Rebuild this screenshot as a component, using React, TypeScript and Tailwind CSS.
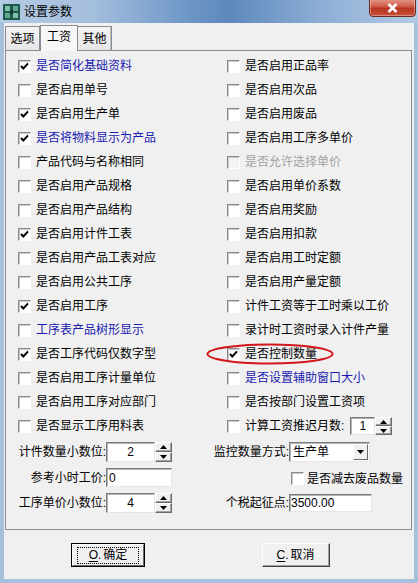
import React from 'react';

type Tone = 'normal' | 'blue' | 'gray';

interface Opt {
  label: string;
  checked?: boolean;
  tone?: Tone;
}

const LEFT: Opt[] = [
  { label: '是否简化基础资料', checked: true, tone: 'blue' },
  { label: '是否启用单号' },
  { label: '是否启用生产单', checked: true },
  { label: '是否将物料显示为产品', checked: true, tone: 'blue' },
  { label: '产品代码与名称相同' },
  { label: '是否启用产品规格' },
  { label: '是否启用产品结构' },
  { label: '是否启用计件工表', checked: true },
  { label: '是否启用产品工表对应' },
  { label: '是否启用公共工序' },
  { label: '是否启用工序', checked: true },
  { label: '工序表产品树形显示', tone: 'blue' },
  { label: '是否工序代码仅数字型', checked: true },
  { label: '是否启用工序计量单位' },
  { label: '是否启用工序对应部门' },
  { label: '是否显示工序用料表' },
];

const RIGHT: Opt[] = [
  { label: '是否启用正品率' },
  { label: '是否启用次品' },
  { label: '是否启用废品' },
  { label: '是否启用工序多单价' },
  { label: '是否允许选择单价', tone: 'gray' },
  { label: '是否启用单价系数' },
  { label: '是否启用奖励' },
  { label: '是否启用扣款' },
  { label: '是否启用工时定额' },
  { label: '是否启用产量定额' },
  { label: '计件工资等于工时乘以工价' },
  { label: '录计时工资时录入计件产量' },
  { label: '是否控制数量', checked: true },
  { label: '是否设置辅助窗口大小', tone: 'blue' },
  { label: '是否按部门设置工资项' },
];

const toneClass: Record<Tone, string> = {
  normal: 'text-black',
  blue: 'text-[#1a1ab0]',
  gray: 'text-[#a3a3a3]',
};

function CheckBox({ checked, disabled }: { checked?: boolean; disabled?: boolean }) {
  return (
    <span
      className={`relative flex h-[13px] w-[13px] shrink-0 items-center justify-center border border-t-[#8a8a8a] border-l-[#8a8a8a] border-b-white border-r-white shadow-[inset_1px_1px_0_#c9c9c9] ${
        disabled ? 'bg-[#f4f4f4]' : 'bg-white'
      }`}
    >
      {checked && (
        <svg width="9" height="9" viewBox="0 0 9 9">
          <path d="M1 4 L3.3 6.5 L8 1.3" fill="none" stroke="#000" strokeWidth="1.9" />
        </svg>
      )}
    </span>
  );
}

function Row({ opt }: { opt: Opt }) {
  const tone = opt.tone ?? 'normal';
  return (
    <div className="flex h-[24px] items-center gap-[5px]">
      <CheckBox checked={opt.checked} disabled={tone === 'gray'} />
      <span className={`text-[12px] leading-none whitespace-nowrap ${toneClass[tone]}`}>
        {opt.label}
      </span>
    </div>
  );
}

function Spinner() {
  const half =
    'flex flex-1 items-center justify-center bg-[#f0f0f0] border border-t-white border-l-white border-b-[#6b6b6b] border-r-[#6b6b6b] shadow-[inset_-1px_-1px_0_#a0a0a0]';
  return (
    <div className="flex h-full w-[17px] flex-col">
      <span className={half}>
        <svg width="7" height="4" viewBox="0 0 7 4">
          <path d="M0 4 L3.5 0 L7 4 Z" fill="#000" />
        </svg>
      </span>
      <span className={half}>
        <svg width="7" height="4" viewBox="0 0 7 4">
          <path d="M0 0 L3.5 4 L7 0 Z" fill="#000" />
        </svg>
      </span>
    </div>
  );
}

const sunken =
  'border border-t-[#7a7a7a] border-l-[#7a7a7a] border-b-[#e6e6e6] border-r-[#e6e6e6] bg-white shadow-[inset_1px_1px_0_#b5b5b5]';

function SpinField({ value, w }: { value: string; w: string }) {
  return (
    <div className="flex h-[20px] items-stretch">
      <div className={`${sunken} ${w} flex items-center justify-center text-[12px] leading-none`}>
        {value}
      </div>
      <Spinner />
    </div>
  );
}

function Button({ hot, label, isDefault }: { hot: string; label: string; isDefault?: boolean }) {
  return (
    <div
      className={`flex h-[24px] items-center justify-center bg-[#f0f0f0] ${
        isDefault
          ? 'w-[74px] border border-black'
          : 'w-[68px] border border-t-white border-l-white border-b-[#404040] border-r-[#404040]'
      }`}
    >
      <div
        className={`flex h-full w-full items-center justify-center ${
          isDefault
            ? 'border border-t-white border-l-white border-b-[#6b6b6b] border-r-[#6b6b6b]'
            : 'border-b border-r border-b-[#a0a0a0] border-r-[#a0a0a0]'
        }`}
      >
        <span
          className={`flex h-[17px] items-center px-[3px] text-[12px] leading-none ${
            isDefault ? 'w-[62px] justify-center border border-dotted border-black' : ''
          }`}
        >
          <span className="underline underline-offset-2">{hot}</span>
          <span>.</span>
          <span className="ml-[2px]">{label}</span>
        </span>
      </div>
    </div>
  );
}

export default function App() {
  return (
    <div className="flex h-[583px] w-[418px] flex-col overflow-hidden bg-[#a6bfdc] font-['Liberation_Sans','Noto_Sans_CJK_SC',sans-serif] text-black">
      {/* title bar */}
      <div className="relative flex h-[23px] shrink-0 items-center bg-[linear-gradient(90deg,#b4cae3_0%,#a4bedd_22%,#6e97c7_45%,#5f89bd_55%,#8fb0d6_78%,#b3c9e3_100%)] pl-[3px]">
        <svg width="17" height="16" viewBox="0 0 17 16" className="shrink-0">
          <rect x="0" y="0" width="17" height="16" fill="#1e5a4e" />
          <rect x="2" y="2" width="5" height="5" fill="#7fc2a8" />
          <rect x="10" y="2" width="5" height="5" fill="#5fa88e" />
          <rect x="2" y="9" width="5" height="5" fill="#5fa88e" />
          <rect x="10" y="9" width="5" height="5" fill="#7fc2a8" />
          <rect x="7" y="6" width="3" height="4" fill="#0f3a31" />
        </svg>
        <span className="ml-[4px] text-[12px] leading-none">设置参数</span>
        <div className="absolute top-[-2px] right-[2px] flex h-[19px] w-[47px] items-center justify-center rounded-b-[4px] border border-[#6e2a20] bg-[linear-gradient(180deg,#e59a8c_0%,#cf5a45_45%,#b53521_55%,#c9503a_100%)] shadow-[inset_0_0_0_1px_rgba(255,255,255,0.35)]">
          <svg width="11" height="10" viewBox="0 0 11 10">
            <path d="M1.5 1 L9.5 9 M9.5 1 L1.5 9" stroke="#fff" strokeWidth="2.6" />
          </svg>
        </div>
      </div>

      {/* client */}
      <div className="mx-[4px] mb-[4px] flex flex-1 flex-col bg-[#f0f0f0]">
        {/* tabs */}
        <div className="flex h-[27px] items-end pl-[1px]">
          <div className="flex h-[24px] w-[35px] items-center justify-center border border-b-0 border-[#898c95] bg-[linear-gradient(180deg,#f4f4f4,#e6e6e6)] text-[12px] leading-none">
            选项
          </div>
          <div className="relative z-10 mb-[-1px] flex h-[26px] w-[38px] items-start justify-center border border-b-0 border-[#898c95] bg-[#f7f7f7] pt-[5px] text-[12px] leading-none">
            工资
          </div>
          <div className="flex h-[24px] w-[34px] items-center justify-center border border-b-0 border-l-0 border-[#898c95] bg-[linear-gradient(180deg,#f4f4f4,#e6e6e6)] shadow-[inset_-1px_0_0_#bfbfbf] text-[12px] leading-none">
            其他
          </div>
        </div>

        {/* panel */}
        <div className="mr-[2px] ml-[1px] flex h-[480px] flex-col border border-[#898c95] pt-[3px] pl-[12px]">
          <div className="flex">
            <div className="flex w-[209px] flex-col">
              {LEFT.map((o) => (
                <Row key={o.label} opt={o} />
              ))}
            </div>
            <div className="flex flex-col">
              {RIGHT.map((o) => (
                <div key={o.label} className="relative">
                  <Row opt={o} />
                  {o.label === '是否控制数量' && (
                    <svg
                      width="128"
                      height="22"
                      viewBox="0 0 128 22"
                      className="pointer-events-none absolute top-[1px] left-[-21px]"
                    >
                      <ellipse cx="64" cy="11" rx="62.5" ry="9.5" fill="none" stroke="#d2161b" strokeWidth="2" />
                    </svg>
                  )}
                </div>
              ))}
              <div className="flex h-[24px] items-center gap-[5px]">
                <CheckBox />
                <span className="text-[12px] leading-none whitespace-nowrap">计算工资推迟月数:</span>
                <div className="ml-[1px] flex h-[18px] items-stretch">
                  <div className={`${sunken} flex w-[25px] items-center justify-center text-[12px] leading-none`}>1</div>
                  <Spinner />
                </div>
              </div>
            </div>
          </div>

          {/* bottom fields */}
          <div className="mt-[4px] ml-[-12px] flex">
            <div className="flex w-[194px] flex-col">
              <div className="flex h-[20px] items-center">
                <span className="w-[100px] text-right text-[12px] leading-none">计件数量小数位:</span>
                <SpinField value="2" w="w-[49px]" />
              </div>
              <div className="mt-[6px] flex h-[19px] items-center">
                <span className="w-[100px] text-right text-[12px] leading-none">参考小时工价:</span>
                <div className={`${sunken} flex h-[19px] w-[66px] items-center pl-[2px] text-[12px] leading-none`}>0</div>
              </div>
              <div className="mt-[7px] flex h-[18px] items-center">
                <span className="w-[100px] text-right text-[12px] leading-none">工序单价小数位:</span>
                <SpinField value="4" w="w-[49px]" />
              </div>
            </div>
            <div className="flex flex-col">
              <div className="flex h-[20px] items-center">
                <span className="w-[89px] text-right text-[12px] leading-none">监控数量方式:</span>
                <div className={`${sunken} flex h-[20px] w-[81px] items-center justify-between pl-[3px] pr-[1px]`}>
                  <span className="text-[12px] leading-none">生产单</span>
                  <span className="flex h-[16px] w-[15px] items-center justify-center border border-t-white border-l-white border-b-[#6b6b6b] border-r-[#6b6b6b] bg-[#f0f0f0]">
                    <svg width="7" height="4" viewBox="0 0 7 4">
                      <path d="M0 0 L3.5 4 L7 0 Z" fill="#000" />
                    </svg>
                  </span>
                </div>
              </div>
              <div className="mt-[6px] flex h-[21px] items-center gap-[3px] pl-[91px]">
                <CheckBox />
                <span className="text-[12px] leading-none whitespace-nowrap">是否减去废品数量</span>
              </div>
              <div className="mt-[5px] flex h-[18px] items-center">
                <span className="w-[89px] text-right text-[12px] leading-none">个税起征点:</span>
                <div className={`${sunken} flex h-[18px] w-[83px] items-center pl-[1px] text-[12px] leading-none`}>3500.00</div>
              </div>
            </div>
          </div>
        </div>

        {/* buttons */}
        <div className="mt-[13px] flex items-start pl-[67px]">
          <Button hot="O" label="确定" isDefault />
          <div className="w-[117px]" />
          <Button hot="C" label="取消" />
        </div>
      </div>
    </div>
  );
}
